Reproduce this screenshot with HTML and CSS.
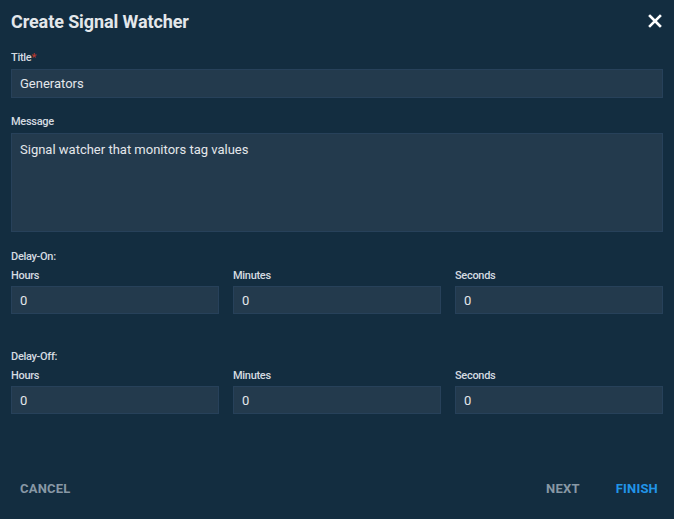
FILE: index.html
```html
<!DOCTYPE html>
<html>
<head>
<meta charset="utf-8">
<link rel="stylesheet" href="styles.css">
</head>
<body>
<div class="dialog">
  <header class="head">
    <h1 class="title">Create Signal Watcher</h1>
    <button class="close" aria-label="Close">
      <svg width="14" height="14" viewBox="0 0 14 14"><path d="M2 2L12 12M12 2L2 12" stroke="#fff" stroke-width="2.6" stroke-linecap="square"/></svg>
    </button>
  </header>
  <div class="body">
    <div class="field">
      <label class="label">Title<span class="req">*</span></label>
      <div class="input">Generators</div>
    </div>
    <div class="field">
      <label class="label">Message</label>
      <div class="input area">Signal watcher that monitors tag values</div>
    </div>
    <div class="group">
      <div class="group-label">Delay-On:</div>
      <div class="row">
        <div class="col"><label class="label sm">Hours</label><div class="input num">0</div></div>
        <div class="col"><label class="label sm">Minutes</label><div class="input num">0</div></div>
        <div class="col"><label class="label sm">Seconds</label><div class="input num">0</div></div>
      </div>
    </div>
    <div class="group off">
      <div class="group-label">Delay-Off:</div>
      <div class="row">
        <div class="col"><label class="label sm">Hours</label><div class="input num">0</div></div>
        <div class="col"><label class="label sm">Minutes</label><div class="input num">0</div></div>
        <div class="col"><label class="label sm">Seconds</label><div class="input num">0</div></div>
      </div>
    </div>
  </div>
  <footer class="foot">
    <button class="btn">CANCEL</button>
    <div class="spacer"></div>
    <button class="btn">NEXT</button>
    <button class="btn primary">FINISH</button>
  </footer>
</div>
</body>
</html>
```
FILE: styles.css
```css
html, body {
  margin: 0;
  padding: 0;
  background: #132d40;
  font-family: Roboto, "Liberation Sans", sans-serif;
  color: #dde2e7;
}
.dialog {
  width: 674px;
  height: 519px;
  box-sizing: border-box;
  display: flex;
  flex-direction: column;
}
.head {
  display: flex;
  align-items: center;
  justify-content: space-between;
  padding: 8px 12px 0 11px;
  height: 26px;
}
.title {
  margin: 0;
  font-size: 18px;
  font-weight: 700;
  color: #e3e7eb;
  letter-spacing: -0.1px;
}
.close {
  background: none;
  border: 0;
  padding: 0;
  width: 14px;
  height: 14px;
  display: flex;
}
.body {
  padding: 0 11px;
  display: flex;
  flex-direction: column;
}
.field {
  display: flex;
  flex-direction: column;
  margin-top: 17px;
}
.label {
  font-size: 11px;
  font-weight: 500;
  color: #d5dbe0;
  line-height: 13px;
  margin-bottom: 5px;
  letter-spacing: -0.3px;
}
.label.sm {
  margin-bottom: 4px;
}
.req { color: #c0392b; }
.input {
  background: #233a4d;
  border: 1px solid #27415a;
  box-sizing: border-box;
  height: 29px;
  padding: 0 8px;
  display: flex;
  align-items: center;
  font-size: 13px;
  color: #e3e7eb;
}
.input.area {
  height: 99px;
  align-items: flex-start;
  padding-top: 8px;
}
.group {
  margin-top: 18px;
}
.group.off {
  margin-top: 36px;
}
.group-label {
  font-size: 11px;
  font-weight: 500;
  color: #d5dbe0;
  line-height: 13px;
  letter-spacing: -0.3px;
  margin-bottom: 6px;
}
.row {
  display: grid;
  grid-template-columns: 1fr 1fr 1fr;
  column-gap: 14px;
}
.col {
  display: flex;
  flex-direction: column;
}
.input.num {
  height: 28px;
}
.foot {
  margin-top: auto;
  display: flex;
  align-items: center;
  padding: 0 6px 19px 10px;
}
.spacer { flex: 1; }
.btn {
  background: none;
  border: 0;
  font-family: Roboto, "Liberation Sans", sans-serif;
  font-size: 13px;
  font-weight: 700;
  color: #8898a5;
  padding: 4px 10px;
  letter-spacing: 0.2px;
}
.btn.primary {
  color: #2195e8;
  margin-left: 16px;
}
```
